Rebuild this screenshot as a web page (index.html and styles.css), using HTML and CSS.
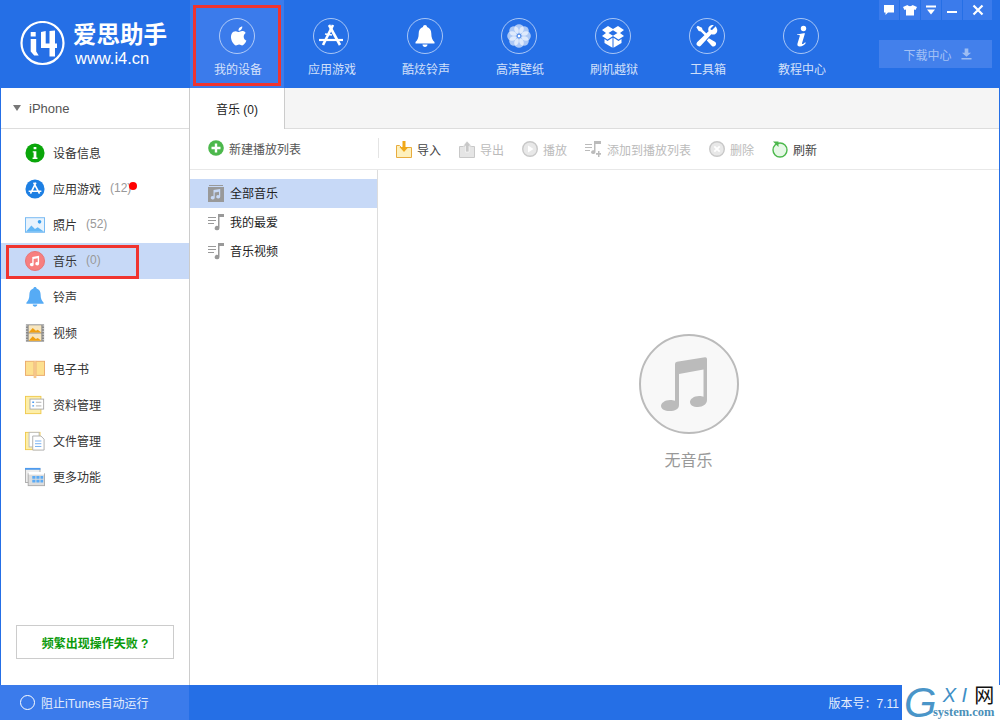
FILE: index.html
```html
<!DOCTYPE html>
<html lang="zh-CN">
<head>
    <meta charset="UTF-8">
    <meta name="viewport" content="width=device-width, initial-scale=1.0">
    <title>爱思助手</title>
    <link rel="stylesheet" href="styles.css">
</head>
<body>
<div class="app">

    <!-- 顶部导航 -->
    <header class="header">
        <div class="logo">
            <div class="logo-mark">
                <svg width="46" height="46" viewBox="0 0 46 46"><circle cx="22.500" cy="22" r="21" fill="none" stroke="#fff" stroke-width="2.200"/><path d="M10.700 11h5v4.500h-5zM10.700 18h5.500v12.500l2.500 4h-4.500l-3.500-4zM21 11l4.700-1v12.500h3.800V10l5.500-.5v13h2V27h-2v8.500h-5.500V27H21z" fill="#fff"/></svg>
            </div>
            <div class="logo-text">
                <div class="logo-name">爱思助手</div>
                <div class="logo-url">www.i4.cn</div>
            </div>
        </div>
        <nav class="nav">
            <div class="nav-item active">
                <span class="nav-icon"><svg width="24" height="24" viewBox="0 0 24 24" fill="#fff"><path d="M18.700 12.400c0-2.300 1.900-3.400 2-3.500-1.100-1.600-2.800-1.800-3.400-1.800-1.400-.1-2.800.9-3.500.9-.7 0-1.900-.8-3.100-.8-1.600 0-3.100.9-3.900 2.300-1.700 2.900-.4 7.200 1.200 9.500.8 1.100 1.700 2.400 3 2.400 1.200 0 1.600-.8 3.100-.8s1.900.8 3.100.8c1.300 0 2.100-1.100 2.900-2.300.9-1.300 1.300-2.600 1.300-2.600s-2.700-1-2.700-4.100zM16.300 5.400c.7-.8 1.100-1.900 1-3-.9 0-2.100.6-2.800 1.400-.6.7-1.100 1.800-1 2.900 1.100.1 2.100-.5 2.800-1.300z"/></svg></span>
                <span class="nav-label">我的设备</span>
            </div>
            <div class="nav-item">
                <span class="nav-icon"><svg width="30" height="30" viewBox="0 0 30 30" fill="none" stroke="#fff"><path d="M17 4L7 24" stroke-width="2.600"/><path d="M13 4l11 20" stroke-width="2.600"/><path d="M3 19h24" stroke-width="2.200"/><path d="M9 13l7 1" stroke-width="1.600"/></svg></span>
                <span class="nav-label">应用游戏</span>
            </div>
            <div class="nav-item">
                <span class="nav-icon"><svg width="20" height="24" viewBox="0 0 20 24" fill="#fff"><path d="M10 1c1.200 0 2 .8 2 1.900 3 .8 4.300 3.500 4.300 6.600 0 4 1 6.500 3.200 8.500v1.500H.5V18c2.200-2 3.200-4.500 3.200-8.500 0-3.100 1.300-5.800 4.300-6.600C8 1.800 8.800 1 10 1zM7.500 20.500h5c0 1.500-1.100 2.500-2.500 2.500s-2.500-1-2.500-2.500z"/></svg></span>
                <span class="nav-label">酷炫铃声</span>
            </div>
            <div class="nav-item">
                <span class="nav-icon"><svg width="26" height="26" viewBox="0 0 26 26" fill="#fff"><g fill-opacity=".62"><circle cx="13" cy="6" r="4.800"/><circle cx="18" cy="8" r="4.800"/><circle cx="20" cy="13" r="4.800"/><circle cx="18" cy="18" r="4.800"/><circle cx="13" cy="20" r="4.800"/><circle cx="8" cy="18" r="4.800"/><circle cx="6" cy="13" r="4.800"/><circle cx="8" cy="8" r="4.800"/></g><circle cx="13" cy="13" r="1.500"/></svg></span>
                <span class="nav-label">高清壁纸</span>
            </div>
            <div class="nav-item">
                <span class="nav-icon"><svg width="24" height="24" viewBox="0 0 24 24" fill="#fff"><path d="M7 2l5 3 5-3 6 4-4 3 4 3-5.500 3.500L12 12l-5.500 3.500L1 12l4-3-4-3zM12 6.300L7.500 9l4.500 2.700L16.500 9z"/><path d="M3.500 15l3 1.900 5-3.100v9.900L3.500 19zM20.500 15l-3 1.900-5-3.100v9.900l8-4.700z"/></svg></span>
                <span class="nav-label">刷机越狱</span>
            </div>
            <div class="nav-item">
                <span class="nav-icon"><svg width="24" height="24" viewBox="0 0 26 26" fill="#fff"><path d="M22.500 2.500l-4 4-1.500-.2-.2-1.500 3.500-3.500c-2.800-.8-6 1.200-6 4.500 0 .8.100 1.300.4 2L2.500 19.400c-1.300 1.300-1 3 0 4s2.800 1.300 4-.1L17.700 11.100c.7.300 1.300.4 2 .4 3.200 0 5-3 4.300-5.800z" /><path d="M3 2L1.500 3.500l2.500 4 2.300.6 4.700 4.700 2-2L8.200 6.200 7.500 4zM15 15.500l-2.200 2.300 5.200 5.700c1.300 1.300 3 1.100 4 0s1.300-2.700 0-4z"/></svg></span>
                <span class="nav-label">工具箱</span>
            </div>
            <div class="nav-item">
                <span class="nav-icon"><svg width="24" height="24" viewBox="0 0 24 24" fill="#fff"><circle cx="14.500" cy="4.500" r="2.700"/><path d="M8 10.500l6.500-1.200h1.500l-3 10c-.2.800.5 1 1.100.6l2.100-1.700.6.700c-1.500 2-3.600 3.600-6 3.600-2 0-2.800-1.300-2.300-3l2.300-7.500c.2-.8-.3-1-1-1H8z"/></svg></span>
                <span class="nav-label">教程中心</span>
            </div>
        </nav>
        <div class="win-area">
            <div class="win-buttons">
                <span class="win-btn"><svg width="12" height="12" viewBox="0 0 12 12" fill="#fff"><path d="M1 1h10v7.500H5L2.500 11V8.500H1z"/></svg></span>
                <span class="win-btn"><svg width="14" height="12" viewBox="0 0 14 12" fill="#fff"><path d="M4.500 1L0 3l1.500 3 1.500-.6V11.500h8V5.400l1.500.6L14 3 9.500 1C9 2.500 5 2.500 4.500 1z"/></svg></span>
                <span class="win-btn"><svg width="12" height="12" viewBox="0 0 12 12" fill="#fff"><path d="M1 1.500h10v2H1zM2 5.500h8L6 10.500z"/></svg></span>
                <span class="win-btn"><svg width="12" height="12" viewBox="0 0 12 12" fill="#fff"><path d="M1 7h10v2H1z"/></svg></span>
                <span class="win-btn close"><svg width="12" height="12" viewBox="0 0 12 12" stroke="#fff" stroke-width="2.200"><path d="M1.500 1.500l9 9M10.500 1.500l-9 9"/></svg></span>
            </div>
            <div class="download">
                <span>下载中心</span>
                <svg width="11" height="12" viewBox="0 0 12 12" fill="#9dbdf3"><path d="M4 0h4v4.500h3L6 9 1 4.500h3zM0.500 10.300h11V12H.5z"/></svg>
            </div>
        </div>
    </header>

    <div class="content">

        <!-- 左侧菜单 -->
        <aside class="sidebar">
            <div class="device"><i class="arrow"></i>iPhone</div>
            <ul class="menu">
                <li class="menu-item">
                    <svg class="menu-icon" viewBox="0 0 22 22"><circle cx="11" cy="11" r="10.500" fill="#0aa60a"/><path d="M9.500 4.500h3v2.500h-3zM8.500 9h4v7h1.200v1.500H8.300V16h1.200v-5.500h-1z" fill="#fff"/></svg>
                    <span>设备信息</span>
                </li>
                <li class="menu-item">
                    <svg class="menu-icon" viewBox="0 0 22 22"><circle cx="11" cy="11" r="10.500" fill="#1d7fe3"/><path d="M12 4L6 16M9.500 4L16 16M4 13.500h14" fill="none" stroke="#fff" stroke-width="1.800"/></svg>
                    <span>应用游戏</span><span class="count">(12)</span><i class="red-dot"></i>
                </li>
                <li class="menu-item">
                    <svg class="menu-icon" viewBox="0 0 22 22"><rect x=".5" y="3" width="21" height="16" fill="#e8f3fd" stroke="#6db5f2"/><circle cx="16" cy="7.500" r="2" fill="#3aa0f0"/><path d="M1 18.500l6-7 4 4 3-2 7 5z" fill="#63b7f5"/></svg>
                    <span>照片</span><span class="count">(52)</span>
                </li>
                <li class="menu-item selected">
                    <svg class="menu-icon" viewBox="0 0 22 22"><circle cx="11" cy="11" r="10.500" fill="#f77f7f" stroke="#e87070"/><path d="M8 6.500l7.500-1.200v8.700a2.100 1.800 0 1 1-1.500-1.700V8l-4.500.7v6.300a2.100 1.800 0 1 1-1.500-1.700z" fill="#fff"/></svg>
                    <span>音乐</span><span class="count">(0)</span>
                </li>
                <li class="menu-item">
                    <svg class="menu-icon" viewBox="0 0 22 22"><path d="M11 0c1 0 1.800.7 1.800 1.700 3.200.8 4.400 3.700 4.400 6.800 0 4 1 6.500 3.300 8.700v1.300h-19v-1.300c2.300-2.200 3.300-4.700 3.300-8.700 0-3.100 1.200-6 4.400-6.800C9.200.7 10 0 11 0zM8.500 19.300h5c0 1.500-1.100 2.400-2.500 2.400s-2.500-.9-2.500-2.400z" fill="#56abf5"/></svg>
                    <span>铃声</span>
                </li>
                <li class="menu-item">
                    <svg class="menu-icon" viewBox="0 0 22 22"><rect x="1" y="1.500" width="20" height="19" fill="#888"/><path d="M2 2.500v17M20 2.500v17" stroke="#ddd" stroke-width="1.400" stroke-dasharray="1.400 1.600"/><rect x="4" y="2.500" width="14" height="8" fill="#f7e6c0"/><rect x="4" y="11.500" width="14" height="8" fill="#f7e6c0"/><path d="M4 10.500l4.500-5 3.500 3 2-1 4 3zM4 19.500l4.500-5 3.500 3 2-1 4 3z" fill="#f0a010"/></svg>
                    <span>视频</span>
                </li>
                <li class="menu-item">
                    <svg class="menu-icon" viewBox="0 0 22 22"><rect x=".5" y="2.500" width="9.500" height="15.500" fill="#fde08f" stroke="#eaa868"/><rect x="12" y="2.500" width="9.500" height="15.500" fill="#fde08f" stroke="#eaa868"/><rect x="9.500" y="2" width="3" height="19" fill="#f5c58a"/></svg>
                    <span>电子书</span>
                </li>
                <li class="menu-item">
                    <svg class="menu-icon" viewBox="0 0 22 22"><rect x=".5" y="1.500" width="17" height="19" fill="#fdeea8" stroke="#efc94a"/><rect x="5.500" y="4.500" width="15" height="11" fill="#fff" stroke="#aaa"/><path d="M8 8h2M8 12h2" stroke="#4d9bef" stroke-width="1.500"/><path d="M12 8h6M12 12h6" stroke="#aaa"/></svg>
                    <span>资料管理</span>
                </li>
                <li class="menu-item">
                    <svg class="menu-icon" viewBox="0 0 22 22"><rect x=".5" y="1.500" width="16" height="19" fill="#fdeea8" stroke="#efc94a"/><rect x="4.500" y="1.500" width="11" height="16" fill="#fff" stroke="#bbb"/><path d="M8.500 5.500h9l3.500 3.500v12H8.500z" fill="#fff" stroke="#aaa"/><path d="M11 11h7M11 14h7M11 17h7" stroke="#6aa9ef"/></svg>
                    <span>文件管理</span>
                </li>
                <li class="menu-item">
                    <svg class="menu-icon" viewBox="0 0 22 22"><rect x=".5" y="2" width="16" height="15" fill="#eee" stroke="#aaa"/><rect x="0" y="1" width="17" height="2" fill="#4d9bef"/><rect x="3.500" y="7.500" width="18" height="13" fill="#ddd" stroke="#aaa"/><rect x="4" y="5.500" width="17" height="3" fill="#fff"/><path d="M8 10h3.500v3H8zM12.500 10H16v3h-3.500zM17 10h3v3h-3zM8 14h3.500v3H8zM12.500 14H16v3h-3.500zM17 14h3v3h-3z" fill="#5aaaf5"/></svg>
                    <span>更多功能</span>
                </li>
            </ul>
            <div class="help-wrap">
                <div class="help">频繁出现操作失败 ?</div>
            </div>
        </aside>

        <!-- 音乐 -->
        <main class="main">
            <div class="tabs">
                <div class="tab">音乐 (0)</div>
            </div>
            <div class="toolbar">
                <div class="new-list">
                    <svg width="16" height="16" viewBox="0 0 16 16"><circle cx="8" cy="8" r="7.800" fill="#4cb84c"/><path d="M6.800 3.500h2.400v3.300h3.300v2.400H9.200v3.300H6.800V9.200H3.500V6.800h3.300z" fill="#fff"/></svg>
                    <span>新建播放列表</span>
                </div>
                <div class="tools">
                    <div class="tool">
                        <svg width="16" height="17" viewBox="0 0 16 17"><path d="M.5 4.500l3 0 2 2h10v10H.5z" fill="#fdf0bd" stroke="#e8ac3e"/><path d="M6.500 0h3v6h3L8 11 3.500 6h3z" fill="#f0a818"/></svg>
                        <span>导入</span>
                    </div>
                    <div class="tool off">
                        <svg width="16" height="17" viewBox="0 0 16 17"><path d="M.5 5.500h15v11H.5z" fill="#e5e5e5" stroke="#c8c8c8"/><path d="M8 0l4.500 5H10v6H6.500V5H4z" fill="#c8c8c8" stroke="#fff" stroke-width=".6"/></svg>
                        <span>导出</span>
                    </div>
                    <div class="tool off">
                        <svg width="16" height="16" viewBox="0 0 16 16"><circle cx="8" cy="8" r="7.300" fill="#e8e8e8" stroke="#c8c8c8" stroke-width="1.400"/><path d="M6 4.500L11.500 8 6 11.500z" fill="#fff"/></svg>
                        <span>播放</span>
                    </div>
                    <div class="tool off wide">
                        <svg width="16" height="17" viewBox="0 0 16 17" fill="#bbb"><path d="M0 3h7v1H0zM0 6h7v1H0zM0 9h5v1H0z"/><path d="M9 0h7v3h-5.500v8a2.200 1.900 0 1 1-1.500-1.700z"/><path d="M11 12h2v-2h1.500v2H16v1.700h-1.500V16H13v-2.300h-2z"/></svg>
                        <span>添加到播放列表</span>
                    </div>
                    <div class="tool off">
                        <svg width="16" height="16" viewBox="0 0 16 16"><circle cx="8" cy="8" r="7.300" fill="#e8e8e8" stroke="#c8c8c8" stroke-width="1.400"/><path d="M5.300 5.300l5.400 5.400M10.700 5.300l-5.400 5.400" stroke="#fff" stroke-width="1.800"/></svg>
                        <span>删除</span>
                    </div>
                    <div class="tool">
                        <svg width="16" height="17" viewBox="0 0 16 17"><circle cx="8" cy="9" r="7" fill="#e6f8e6" stroke="#4cb84c" stroke-width="1.400"/><path d="M1 .5h5.500V6z" fill="#4cb84c"/></svg>
                        <span>刷新</span>
                    </div>
                </div>
            </div>
            <div class="panes">
                <ul class="lists">
                    <li class="list-item selected">
                        <svg width="16" height="17" viewBox="0 0 16 17" fill="#999"><path d="M1 0h14v1H1z"/><path fill-rule="evenodd" d="M0 2h16v15H0zM5.500 5v6.200a2 1.700 0 1 0 1.200 1.600V7.500l4.300-.7v3.400a2 1.700 0 1 0 1.200 1.600V4z"/></svg>
                        <span>全部音乐</span>
                    </li>
                    <li class="list-item">
                        <svg width="16" height="17" viewBox="0 0 16 17" fill="#999"><path d="M0 3h8v1H0zM0 6h8v1H0zM0 9h6v1H0z"/><path d="M10 0h6v3h-4.500v11a2.400 2.200 0 1 1-1.500-2z"/></svg>
                        <span>我的最爱</span>
                    </li>
                    <li class="list-item">
                        <svg width="16" height="17" viewBox="0 0 16 17" fill="#999"><path d="M0 3h8v1H0zM0 6h8v1H0zM0 9h6v1H0z"/><path d="M10 0h6v3h-4.500v11a2.400 2.200 0 1 1-1.500-2z"/></svg>
                        <span>音乐视频</span>
                    </li>
                </ul>
                <div class="empty">
                    <div class="empty-circle">
                        <svg width="47" height="54" viewBox="0 0 47 54" fill="#bbb"><path d="M14 7q0-2 2-2.300L44 .2q2-.2 2 1.800V43c0 4-4 7-9 7-5 0-8-2-8-5s4-6 9-6c2 0 3.500.3 4.500.8V12.500L18 17v31c0 4-4 6-9.500 6C4 54 0 52 0 49s4-6 9-6c2 0 3.500.3 5 .8z"/></svg>
                    </div>
                    <div class="empty-text">无音乐</div>
                </div>
            </div>
        </main>
    </div>

    <!-- 底部状态栏 -->
    <footer class="footer">
        <div class="itunes"><i class="ring"></i>阻止iTunes自动运行</div>
        <div class="version">版本号：7.11</div>
        <div class="watermark">
            <div class="wm-top"><span class="wm-g">G</span><span class="wm-xi">X I</span><span class="wm-net">网</span></div>
            <div class="wm-url">system.com</div>
        </div>
    </footer>
</div>
</body>
</html>
```

FILE: styles.css
```css
*, *::before, *::after {
    box-sizing: border-box;
}

body {
    margin: 0;
    font-family: "Liberation Sans", "Noto Sans CJK SC", sans-serif;
    font-size: 12px;
    color: #333;
    background: #fff;
}

ul {
    margin: 0;
    padding: 0;
    list-style: none;
}

.app {
    width: 1000px;
    height: 720px;
    display: flex;
    flex-direction: column;
    overflow: hidden;
}

/* 顶部 */
.header {
    height: 88px;
    flex: none;
    display: flex;
    background: #256fe6;
    color: #fff;
}

.logo {
    width: 190px;
    flex: none;
    display: flex;
    gap: 7px;
    padding: 21px 0 0 20px;
}

.logo-mark {
    width: 46px;
    height: 46px;
}

.logo-name {
    font-size: 23.500px;
    font-weight: 700;
    line-height: 29px;
}

.logo-url {
    font-size: 16.500px;
    line-height: 17px;
    padding-left: 2px;
}

.nav {
    display: flex;
    width: 658px;
    flex: none;
}

.nav-item {
    width: 94px;
    display: flex;
    flex-direction: column;
    align-items: center;
    padding-top: 18px;
    position: relative;
}

.nav-item.active {
    background: #3b7beb;
}

/* 红色标注框 */
.nav-item.active::after {
    content: "";
    position: absolute;
    left: 3px;
    right: 3px;
    top: 5px;
    bottom: 2px;
    border: 3px solid #f0342f;
}

.nav-icon {
    width: 36px;
    height: 36px;
    border: 1px solid rgba(255, 255, 255, .6);
    border-radius: 50%;
    display: flex;
    align-items: center;
    justify-content: center;
}

.nav-label {
    margin-top: 8px;
    margin-left: 2px;
    line-height: 16px;
    color: rgba(255, 255, 255, .8);
}

.win-area {
    width: 113px;
    margin-left: 31px;
    flex: none;
}

.win-buttons {
    display: flex;
    gap: 1px;
    height: 20px;
}

.win-btn {
    width: 20px;
    background: #3b7beb;
    display: flex;
    align-items: center;
    justify-content: center;
}

.win-btn.close {
    width: 29px;
}

.download {
    margin-top: 20px;
    height: 28px;
    background: #4380eb;
    color: #a3c1f5;
    display: flex;
    align-items: center;
    justify-content: center;
    gap: 9px;
    padding-left: 4px;
}

/* 主体 */
.content {
    flex: 1;
    display: flex;
    min-height: 0;
    border-left: 1px solid #256fe6;
    border-right: 1px solid #256fe6;
}

.sidebar {
    width: 189px;
    flex: none;
    display: flex;
    flex-direction: column;
    border-right: 1px solid #ccc;
}

.device {
    height: 41px;
    flex: none;
    display: flex;
    align-items: center;
    padding-left: 12px;
    font-size: 13px;
    color: #555;
    border-bottom: 1px solid #ddd;
}

.arrow {
    width: 0;
    height: 0;
    border-left: 4px solid transparent;
    border-right: 4px solid transparent;
    border-top: 6px solid #777;
    margin-right: 8px;
}

.menu {
    padding-top: 6px;
}

.menu-item {
    height: 36px;
    display: flex;
    align-items: center;
    padding-left: 24px;
    position: relative;
    color: #333;
}

.menu-item span {
    margin-bottom: 2px;
}

.menu-icon {
    width: 20px;
    height: 20px;
    margin-right: 8px;
    flex: none;
}

.menu-item.selected {
    background: #c7d9f7;
}

/* 红色标注框 */
.menu-item.selected::after {
    content: "";
    position: absolute;
    left: 5px;
    top: 2px;
    width: 133px;
    height: 34px;
    border: 3px solid #f0342f;
}

.count {
    margin-left: 9px;
    color: #999;
}

.red-dot {
    position: absolute;
    left: 128px;
    top: 11px;
    width: 8px;
    height: 8px;
    border-radius: 50%;
    background: #f00;
}

.help-wrap {
    margin-top: auto;
    padding: 0 15px 26px;
}

.help {
    height: 34px;
    border: 1px solid #ccc;
    display: flex;
    align-items: center;
    justify-content: center;
    font-weight: 700;
    color: #0a9a0a;
}

.main {
    flex: 1;
    min-width: 0;
    display: flex;
    flex-direction: column;
}

.tabs {
    height: 41px;
    flex: none;
    background: #f5f5f5;
    border-bottom: 1px solid #ddd;
    display: flex;
}

.tab {
    width: 95px;
    height: 41px;
    background: #fff;
    border-right: 1px solid #ccc;
    display: flex;
    align-items: center;
    justify-content: center;
    color: #222;
}

.toolbar {
    height: 41px;
    flex: none;
    display: flex;
    border-bottom: 1px solid #e8e8e8;
}

.new-list {
    width: 188px;
    display: flex;
    align-items: center;
    gap: 5px;
    padding: 0 0 2px 18px;
    color: #555;
}

.tools {
    flex: 1;
    display: flex;
    align-items: center;
    padding-left: 18px;
    gap: 18px;
    position: relative;
}

.tools::before {
    content: "";
    position: absolute;
    left: 0;
    top: 9px;
    height: 20px;
    border-left: 1px solid #e4e4e4;
}

.tool {
    display: flex;
    align-items: center;
    gap: 5px;
    color: #444;
}

.tool.off {
    color: #bbb;
}

.tool.wide {
    gap: 6px;
}

.panes {
    flex: 1;
    display: flex;
    min-height: 0;
}

.lists {
    width: 188px;
    flex: none;
    padding-top: 9px;
    border-right: 1px solid #ddd;
}

.list-item {
    height: 29px;
    display: flex;
    align-items: center;
    gap: 6px;
    padding-left: 18px;
    color: #222;
}

.list-item span {
    margin-bottom: 2px;
}

.list-item.selected {
    background: #c7d9f7;
}

.empty {
    flex: 1;
    display: flex;
    flex-direction: column;
    align-items: center;
    padding-top: 164px;
}

.empty-circle {
    width: 100px;
    height: 100px;
    border: 2px solid #bbb;
    border-radius: 50%;
    background: #f8f8f8;
    display: flex;
    align-items: center;
    justify-content: center;
    padding-right: 8px;
}

.empty-text {
    margin-top: 15px;
    font-size: 16px;
    line-height: 24px;
    color: #999;
}

/* 底部 */
.footer {
    height: 35px;
    flex: none;
    display: flex;
    align-items: center;
    background: #256fe6;
    color: #fff;
}

.itunes {
    width: 189px;
    height: 35px;
    display: flex;
    align-items: center;
    padding-left: 20px;
    background: #3b7beb;
    color: #e4edfc;
}

.ring {
    width: 15px;
    height: 15px;
    border: 1px solid #fff;
    border-radius: 50%;
    margin-right: 6px;
}

.version {
    margin-left: auto;
    margin-right: 3px;
    color: #e4edfc;
}

.watermark {
    width: 98px;
    height: 35px;
    background: #fff;
    position: relative;
    font-family: "Liberation Serif", serif;
}

.wm-top {
    display: flex;
    align-items: flex-start;
    height: 20px;
}

.wm-g {
    font-family: "Liberation Sans", sans-serif;
    font-style: italic;
    font-size: 42px;
    line-height: 35px;
    color: #4a95c8;
    margin-left: 2px;
}

.wm-xi {
    font-family: "Liberation Sans", sans-serif;
    font-style: italic;
    font-size: 20px;
    line-height: 20px;
    color: #3f8fc6;
    margin-left: 6px;
    white-space: pre;
}

.wm-net {
    font-family: "Noto Sans CJK SC", sans-serif;
    font-size: 20px;
    line-height: 20px;
    color: #111;
    margin-left: 7px;
}

.wm-url {
    position: absolute;
    left: 31px;
    bottom: 2px;
    font-size: 12.500px;
    font-weight: 700;
    line-height: 12px;
    color: #4a8fb8;
}
```
